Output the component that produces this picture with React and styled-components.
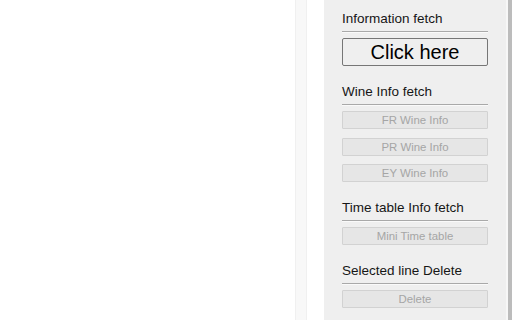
import React from "react";
import styled, { createGlobalStyle } from "styled-components";

const Global = createGlobalStyle`
  html, body { margin: 0; padding: 0; background: #fff; }
  body { font-family: "Liberation Sans", Arial, sans-serif; }
`;

const Page = styled.div`
  display: flex;
  height: 320px;
  width: 512px;
  overflow: hidden;
`;

const Blank = styled.div`
  width: 295px;
  background: #ffffff;
`;

const Strip = styled.div`
  width: 10px;
  background: #f8f8f8;
  border-left: 1px solid #f0f0f0;
  border-right: 1px solid #f0f0f0;
`;

const Gap = styled.div`
  width: 17px;
  background: #ffffff;
`;

const Panel = styled.div`
  width: 164px;
  background: #efefef;
  padding: 11px 0 0 18px;
  display: flex;
  flex-direction: column;
`;

const Edge = styled.div`
  width: 2px;
  background: #f7f7f7;
`;

const Scroll = styled.div`
  width: 4px;
  background: #bcbcbc;
`;

const Section = styled.div`
  width: 146px;
  display: flex;
  flex-direction: column;
  margin-top: ${(p) => (p.$first ? 0 : 18)}px;
`;

const Heading = styled.div`
  font-size: 13.5px;
  line-height: 15px;
  color: #161616;
  padding-bottom: 5px;
  border-bottom: 1px solid #a9a9a9;
  box-shadow: 0 1px 0 #fafafa;
  white-space: nowrap;
`;

const Buttons = styled.div`
  display: flex;
  flex-direction: column;
  gap: 8.5px;
  margin-top: 6px;
`;

const BigButton = styled.button`
  height: 28px;
  width: 146px;
  box-sizing: border-box;
  border: 1px solid #767676;
  border-radius: 2px;
  background: #efefef;
  color: #000;
  font-family: "Liberation Sans", Arial, sans-serif;
  font-size: 20px;
  padding: 0;
  margin: 0;
`;

const SmallButton = styled.button`
  height: 18px;
  width: 146px;
  box-sizing: border-box;
  border: 1px solid #d2d2d2;
  border-radius: 1px;
  background: #e6e6e6;
  color: #a5a5a5;
  font-family: "Liberation Sans", Arial, sans-serif;
  font-size: 11.4px;
  padding: 0;
  margin: 0;
`;

const sections = [
  { title: "Information fetch", big: "Click here" },
  { title: "Wine Info fetch", small: ["FR Wine Info", "PR Wine Info", "EY Wine Info"] },
  { title: "Time table Info fetch", small: ["Mini Time table"] },
  { title: "Selected line Delete", small: ["Delete"] },
];

export default function App() {
  return (
    <>
      <Global />
      <Page>
        <Blank />
        <Strip />
        <Gap />
        <Panel>
          {sections.map((s, i) => (
            <Section key={s.title} $first={i === 0}>
              <Heading>{s.title}</Heading>
              <Buttons>
                {s.big && <BigButton>{s.big}</BigButton>}
                {s.small &&
                  s.small.map((b) => (
                    <SmallButton key={b} disabled>
                      {b}
                    </SmallButton>
                  ))}
              </Buttons>
            </Section>
          ))}
        </Panel>
        <Edge />
        <Scroll />
      </Page>
    </>
  );
}
